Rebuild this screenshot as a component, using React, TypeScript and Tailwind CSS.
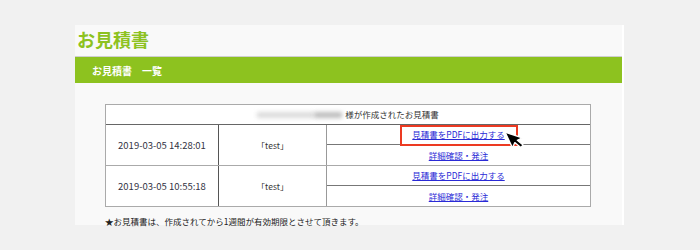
import React from "react";

const rows = [
  { date: "2019-03-05 14:28:01", name: "「test」", highlight: true },
  { date: "2019-03-05 10:55:18", name: "「test」", highlight: false },
];

const Cursor = () => (
  <svg width="26" height="26" viewBox="0 0 24 24" className="absolute left-[176px] top-[5px] z-10">
    <path
      d="M2 2 L2 18 L6 14.5 L9 21 L12 19.7 L9 13.5 L14 13.5 Z"
      transform="rotate(-25 2 2)"
      fill="#000"
      stroke="#fff"
      strokeWidth="1.2"
      strokeLinejoin="round"
    />
  </svg>
);

export default function App() {
  return (
    <div
      className="w-[700px] h-[250px] bg-[#f1f1f1] pt-[25px] pl-[75px] overflow-hidden"
      style={{ fontFamily: '"Noto Sans CJK JP", "Noto Sans", sans-serif' }}
    >
      <div className="w-[549px] h-[200px] bg-[#f9f9f9] border-r-2 border-white">
        {/* title */}
        <div className="h-[31px] pt-[4px] pl-[2px] text-[18px] leading-[20px] font-bold text-[#8dc21f]">
          お見積書
        </div>
        <div className="h-[27px] border-t border-[#cfcfcf] bg-[#8dc21f] pl-[17px] flex items-center text-[10px] font-bold text-white">
          お見積書　一覧
        </div>

        <div className="pt-[21px] pl-[30px]">
          <div className="w-[486px] border border-[#aaaaaa] bg-white text-[8.5px] text-[#333]">
            <div className="h-[20px] border-b border-[#666] flex items-center justify-center">
              <span className="inline-flex items-center mr-[3px]">
                <span className="inline-block w-[57px] h-[6px] bg-[#dcdcdc] blur-[2px]" />
                <span className="inline-block w-[28px] h-[6px] bg-[#bdbdbd] blur-[2px]" />
              </span>
              様が作成されたお見積書
            </div>
            {rows.map((r, i) => (
              <div key={i} className={`flex ${i === 0 ? "border-b border-[#aaaaaa]" : ""}`}>
                <div className="w-[113px] border-r border-[#555] flex items-center justify-center text-[9.5px] text-[#334]">
                  {r.date}
                </div>
                <div className="w-[108px] border-r border-[#999] flex items-center justify-center">
                  {r.name}
                </div>
                <div className="flex-1 flex flex-col">
                  <div className="relative h-[20px] border-b border-[#777] flex items-center justify-center">
                    <a href="#" className="underline text-[#2a2ad6]">
                      見積書をPDFに出力する
                    </a>
                    {r.highlight && (
                      <>
                        <div className="absolute left-[73px] top-0 w-[118px] h-[21px] border-2 border-[#ec3a22]" />
                        <Cursor />
                      </>
                    )}
                  </div>
                  <div className="h-[20px] flex items-center justify-center">
                    <a href="#" className="underline text-[#2a2ad6]">
                      詳細確認・発注
                    </a>
                  </div>
                </div>
              </div>
            ))}
          </div>
          <div className="mt-[8px] text-[8.5px] leading-[12px] text-[#222]">
            ★お見積書は、作成されてから1週間が有効期限とさせて頂きます。
          </div>
        </div>
      </div>
    </div>
  );
}
